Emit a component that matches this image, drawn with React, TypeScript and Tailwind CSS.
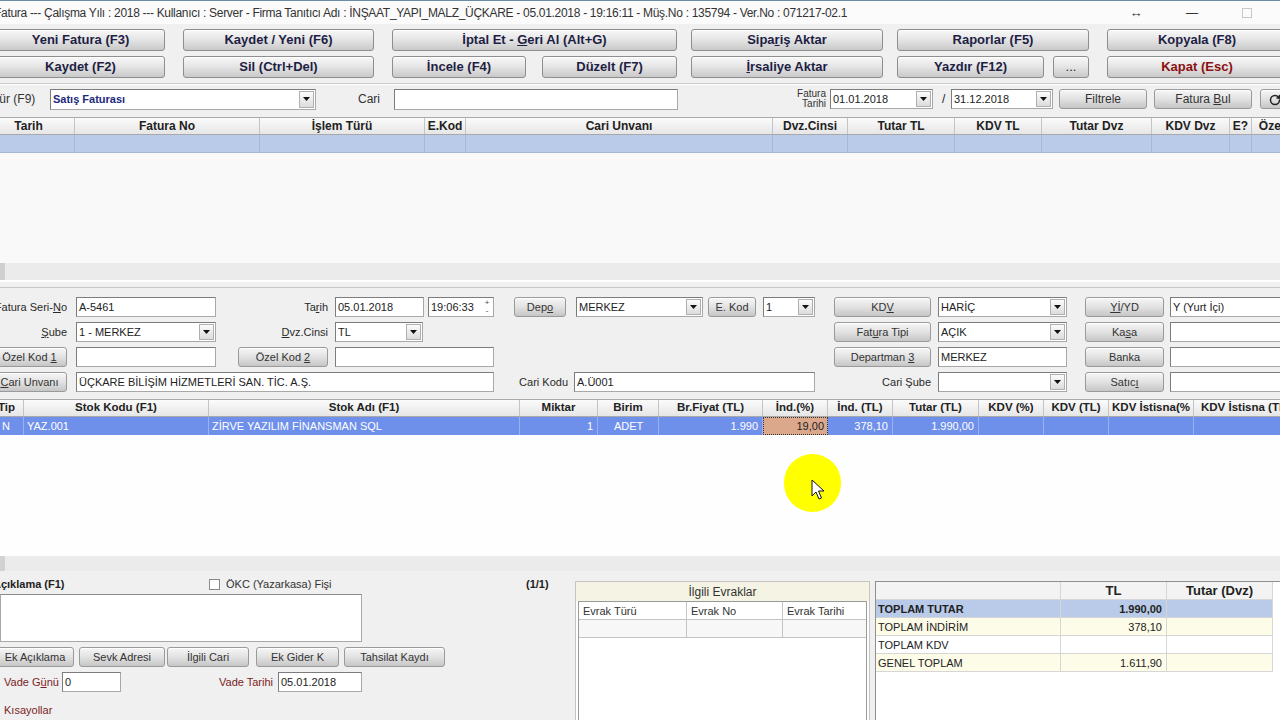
import React from "react"
import { RotateCw } from "lucide-react"

function Arrow() {
  return (
    <svg width="7" height="4" viewBox="0 0 7 4">
      <path d="M0 0h7L3.5 4z" fill="#111" />
    </svg>
  )
}

function BigBtn({ className = "", children, red }: { className?: string; children: React.ReactNode; red?: boolean }) {
  return (
    <div
      className={`flex h-[22px] shrink-0 items-center justify-center rounded-[3px] border border-[#8e8e8e] bg-linear-to-b from-[#f8f8f8] via-[#e4e4e4] to-[#c9c9c9] text-[13px] font-bold shadow-[inset_0_1px_0_#fff] ${
        red ? "text-[#8b1010]" : "text-[#1e1e44]"
      } ${className}`}
    >
      <span className="whitespace-pre">{children}</span>
    </div>
  )
}

function Btn({ className = "", children }: { className?: string; children: React.ReactNode }) {
  return (
    <div
      className={`flex h-[20px] shrink-0 items-center justify-center rounded-[3px] border border-[#9a9a9a] bg-linear-to-b from-[#f6f6f6] via-[#e2e2e2] to-[#c6c6c6] text-[11px] text-[#333] shadow-[inset_0_1px_0_#fff] ${className}`}
    >
      <span className="whitespace-pre">{children}</span>
    </div>
  )
}

function Input({ className = "", value = "" }: { className?: string; value?: string }) {
  return (
    <div
      className={`flex h-[20px] shrink-0 items-center truncate border border-[#a8a8a8] border-t-[#7c7c7c] border-l-[#7c7c7c] bg-white px-[2px] text-[11px] text-[#222] ${className}`}
    >
      {value}
    </div>
  )
}

function Select({ className = "", value = "", valueClass = "text-[#222]" }: { className?: string; value?: string; valueClass?: string }) {
  return (
    <div className={`flex h-[20px] shrink-0 items-stretch border border-[#a8a8a8] border-t-[#7c7c7c] border-l-[#7c7c7c] bg-white ${className}`}>
      <span className={`flex-1 truncate px-[2px] text-[11px] leading-[18px] ${valueClass}`}>{value}</span>
      <span className="m-[1px] flex w-[15px] items-center justify-center border border-[#b0b0b0] bg-linear-to-b from-[#fbfbfb] to-[#dcdcdc]">
        <Arrow />
      </span>
    </div>
  )
}

function Label({ className = "", children }: { className?: string; children: React.ReactNode }) {
  return <div className={`shrink-0 whitespace-nowrap text-right text-[11px] text-[#2a2a2a] ${className}`}>{children}</div>
}

const invoiceCols: [string, string][] = [
  ["Tarih", "w-[92px]"],
  ["Fatura No", "w-[185px]"],
  ["İşlem Türü", "w-[165px]"],
  ["E.Kod", "w-[41px]"],
  ["Cari Unvanı", "w-[307px]"],
  ["Dvz.Cinsi", "w-[75px]"],
  ["Tutar TL", "w-[107px]"],
  ["KDV TL", "w-[87px]"],
  ["Tutar Dvz", "w-[110px]"],
  ["KDV Dvz", "w-[78px]"],
  ["E?", "w-[22px]"],
  ["Özel", "w-[40px]"],
]

const itemCols: { t: string; w: string; v: string; a: string; c?: string }[] = [
  { t: "Tip", w: "w-[34px]", v: "N", a: "text-left pl-[12px]" },
  { t: "Stok Kodu (F1)", w: "w-[185px]", v: "YAZ.001", a: "text-left pl-[3px]" },
  { t: "Stok Adı (F1)", w: "w-[311px]", v: "ZİRVE YAZILIM FİNANSMAN SQL", a: "text-left pl-[3px]" },
  { t: "Miktar", w: "w-[78px]", v: "1", a: "text-right pr-[4px]" },
  { t: "Birim", w: "w-[61px]", v: "ADET", a: "text-left pl-[16px]" },
  { t: "Br.Fiyat (TL)", w: "w-[104px]", v: "1.990", a: "text-right pr-[4px]" },
  { t: "İnd.(%)", w: "w-[65px]", v: "19,00", a: "text-right pr-[3px]", c: "bg-[#dba88c] text-[#222] outline-1 outline-dotted outline-[#333] -outline-offset-1" },
  { t: "İnd. (TL)", w: "w-[65px]", v: "378,10", a: "text-right pr-[4px]" },
  { t: "Tutar (TL)", w: "w-[86px]", v: "1.990,00", a: "text-right pr-[4px]" },
  { t: "KDV (%)", w: "w-[65px]", v: "", a: "" },
  { t: "KDV (TL)", w: "w-[65px]", v: "", a: "" },
  { t: "KDV İstisna(%", w: "w-[85px]", v: "", a: "" },
  { t: "KDV İstisna (TL", w: "w-[100px]", v: "", a: "" },
]

function HeadCell({ className = "", children }: { className?: string; children: React.ReactNode }) {
  return (
    <div
      className={`flex h-full shrink-0 items-center justify-center overflow-hidden whitespace-nowrap border-r border-[#c4c4c4] bg-linear-to-b from-[#fbfbfb] to-[#e6e6e6] font-bold text-[#222] ${className}`}
    >
      {children}
    </div>
  )
}

export default function App() {
  return (
    <div className="relative h-[720px] w-[1280px] overflow-hidden bg-[#f0f0f0] font-['Liberation_Sans',Arial,sans-serif] text-[#222]">
      {/* title bar */}
      <div className="flex h-[24px] items-center border-t border-[#6d8aa6] bg-[#fbfbfb]">
        <div className="-ml-[6px] flex-1 whitespace-nowrap text-[12px] tracking-[-0.3px] text-[#333]">
          Fatura --- Çalışma Yılı : 2018 --- Kullanıcı : Server - Firma Tanıtıcı Adı : İNŞAAT_YAPI_MALZ_ÜÇKARE - 05.01.2018 -
          19:16:11 - Müş.No : 135794 - Ver.No : 071217-02.1
        </div>
        <div className="flex w-[152px] shrink-0 items-center text-[#333]">
          <span className="w-[16px] text-center text-[13px]">↔</span>
          <span className="ml-[38px] w-[20px] text-center text-[12px]">—</span>
          <span className="ml-[40px] h-[10px] w-[10px] border border-[#c8c8c8]" />
        </div>
      </div>

      {/* toolbar buttons */}
      <div className="flex flex-col gap-[5px] pt-[5px]">
        <div className="flex">
          <BigBtn className="-ml-[4px] w-[169px]">Yeni Fatura (F3)</BigBtn>
          <BigBtn className="ml-[18px] w-[191px]">Kaydet / Yeni (F6)</BigBtn>
          <BigBtn className="ml-[18px] w-[285px]">
            İptal Et - <u>G</u>eri Al (Alt+G)
          </BigBtn>
          <BigBtn className="ml-[14px] w-[192px]">
            Sipa<u>r</u>iş Aktar
          </BigBtn>
          <BigBtn className="ml-[14px] w-[192px]">Raporlar (F5)</BigBtn>
          <BigBtn className="ml-[18px] w-[180px]">Kopyala (F8)</BigBtn>
        </div>
        <div className="flex">
          <BigBtn className="-ml-[4px] w-[169px]">Kaydet (F2)</BigBtn>
          <BigBtn className="ml-[18px] w-[191px]">Sil (Ctrl+Del)</BigBtn>
          <BigBtn className="ml-[18px] w-[134px]">İncele (F4)</BigBtn>
          <BigBtn className="ml-[16px] w-[135px]">Düzelt (F7)</BigBtn>
          <BigBtn className="ml-[14px] w-[192px]">
            <u>İ</u>rsaliye Aktar
          </BigBtn>
          <BigBtn className="ml-[14px] w-[147px]">Yazdır (F12)</BigBtn>
          <BigBtn className="ml-[9px] w-[36px] font-normal">...</BigBtn>
          <BigBtn red className="ml-[18px] w-[180px]">
            Kapat (Esc)
          </BigBtn>
        </div>
      </div>

      {/* filter row */}
      <div className="mt-[5px] border-t border-[#c9c9c9] shadow-[inset_0_1px_0_#fff]">
        <div className="mt-[4px] flex h-[22px] items-center">
          <div className="-ml-[8px] w-[48px] shrink-0 text-[12px] text-[#333]">Tür (F9)</div>
          <Select className="ml-[10px] h-[21px] w-[266px]" value="Satış Faturası" valueClass="font-bold text-[#1c2a7c]" />
          <div className="ml-[42px] w-[24px] shrink-0 text-[12px] text-[#333]">Cari</div>
          <Input className="ml-[12px] h-[21px] w-[284px]" />
          <div className="ml-[112px] w-[36px] shrink-0 text-right text-[10px] leading-[10px] text-[#333]">
            Fatura
            <br />
            Tarihi
          </div>
          <Select className="ml-[4px] w-[103px]" value="01.01.2018" />
          <div className="ml-[9px] w-[8px] shrink-0 text-[12px]">/</div>
          <Select className="ml-[1px] w-[102px]" value="31.12.2018" />
          <Btn className="ml-[6px] w-[88px] text-[12px]">Filtrele</Btn>
          <Btn className="ml-[7px] w-[98px] text-[12px]">
            Fatura <u>B</u>ul
          </Btn>
          <Btn className="ml-[8px] w-[30px]">
            <RotateCw size={12} strokeWidth={3} color="#222" className="mt-[2px]" />
          </Btn>
        </div>
      </div>

      {/* invoice grid */}
      <div className="mt-[7px] flex h-[18px] -ml-[17px] border-y border-[#a9a9a9]">
        {invoiceCols.map(([t, w]) => (
          <HeadCell key={t} className={`${w} text-[12px]`}>
            {t}
          </HeadCell>
        ))}
      </div>
      <div className="flex h-[18px] -ml-[17px] border-b border-[#a5b6d6] bg-[#b9cbe9]">
        {invoiceCols.map(([t, w]) => (
          <div key={t} className={`${w} shrink-0 border-r border-[#a6b7d8]`} />
        ))}
      </div>
      <div className="h-[110px] bg-[#f9f9f9]" />
      <div className="flex h-[17px] bg-[#ebebeb]">
        <div className="w-[5px] bg-[#cfcfcf]" />
      </div>
      <div className="h-[14px] border-t-2 border-white">
        <div className="mt-[5px] border-b border-[#c8c8c8]" />
      </div>

      {/* form */}
      <div className="flex flex-col gap-[5px] pt-[3px]">
        <div className="flex h-[20px] items-center">
          <Label className="-ml-[6px] w-[73px]">
            Fatura Seri-<u>N</u>o
          </Label>
          <Input className="ml-[9px] w-[140px]" value="A-5461" />
          <Label className="w-[112px]">
            Ta<u>r</u>ih
          </Label>
          <Input className="ml-[7px] w-[89px]" value="05.01.2018" />
          <div className="ml-[4px] flex h-[20px] w-[66px] shrink-0 items-center border border-[#a8a8a8] border-t-[#7c7c7c] border-l-[#7c7c7c] bg-white text-[11px]">
            <span className="flex-1 pl-[2px]">19:06:33</span>
            <span className="flex h-full w-[12px] flex-col items-center justify-center text-[8px] leading-[8px] text-[#444]">
              <span>+</span>
              <span>-</span>
            </span>
          </div>
          <Btn className="ml-[20px] w-[52px]">
            Dep<u>o</u>
          </Btn>
          <Select className="ml-[10px] w-[127px]" value="MERKEZ" />
          <Btn className="ml-[5px] w-[48px]">E. Kod</Btn>
          <Select className="ml-[7px] w-[52px]" value="1" />
          <Btn className="ml-[19px] w-[97px]">
            KD<u>V</u>
          </Btn>
          <Select className="ml-[7px] w-[129px]" value="HARİÇ" />
          <Btn className="ml-[18px] w-[79px]">
            <u>Yİ</u>/YD
          </Btn>
          <Input className="ml-[6px] w-[120px]" value="Y (Yurt İçi)" />
        </div>

        <div className="flex h-[20px] items-center">
          <Label className="-ml-[6px] w-[73px]">
            <u>Ş</u>ube
          </Label>
          <Select className="ml-[9px] w-[140px]" value="1 - MERKEZ" />
          <Label className="w-[112px]">
            <u>D</u>vz.Cinsi
          </Label>
          <Select className="ml-[7px] w-[88px]" value="TL" />
          <div className="w-[411px] shrink-0" />
          <Btn className="w-[97px]">
            Fat<u>u</u>ra Tipi
          </Btn>
          <Select className="ml-[7px] w-[129px]" value="AÇIK" />
          <Btn className="ml-[18px] w-[79px]">
            Ka<u>s</u>a
          </Btn>
          <Input className="ml-[6px] w-[120px]" />
        </div>

        <div className="flex h-[20px] items-center">
          <Btn className="-ml-[8px] w-[75px]">
            Özel Kod <u>1</u>
          </Btn>
          <Input className="ml-[9px] w-[140px]" />
          <Btn className="ml-[22px] w-[90px]">
            Özel Kod <u>2</u>
          </Btn>
          <Input className="ml-[7px] w-[159px]" />
          <div className="w-[340px] shrink-0" />
          <Btn className="w-[97px]">
            Departman <u>3</u>
          </Btn>
          <Input className="ml-[7px] w-[129px]" value="MERKEZ" />
          <Btn className="ml-[18px] w-[79px]">Banka</Btn>
          <Input className="ml-[6px] w-[120px]" />
        </div>

        <div className="flex h-[20px] items-center">
          <Btn className="-ml-[8px] w-[75px]">
            <u>C</u>ari Unvanı
          </Btn>
          <Input className="ml-[9px] w-[418px]" value="ÜÇKARE BİLİŞİM HİZMETLERİ SAN. TİC. A.Ş." />
          <Label className="w-[74px]">Cari Kodu</Label>
          <Input className="ml-[6px] w-[241px]" value="A.Ü001" />
          <Label className="w-[116px]">Cari Şube</Label>
          <Select className="ml-[7px] w-[129px]" />
          <Btn className="ml-[18px] w-[79px]">
            Satıc<u>ı</u>
          </Btn>
          <Input className="ml-[6px] w-[120px]" />
        </div>
      </div>

      {/* items grid */}
      <div className="mt-[7px] flex h-[18px] -ml-[10px] border-y border-[#a9a9a9]">
        {itemCols.map((c) => (
          <HeadCell key={c.t} className={`${c.w} text-[11.5px]`}>
            {c.t}
          </HeadCell>
        ))}
      </div>
      <div className="flex h-[18px] -ml-[10px] bg-[#6f90ea] text-[11px] text-white">
        {itemCols.map((c) => (
          <div
            key={c.t}
            className={`${c.w} ${c.a} ${c.c ?? ""} shrink-0 overflow-hidden whitespace-nowrap border-r border-[#9bb2f0] leading-[18px]`}
          >
            {c.v}
          </div>
        ))}
      </div>
      <div className="h-[121px] bg-[#fefefe]" />
      <div className="flex h-[15px] bg-[#ebebeb]">
        <div className="w-[5px] bg-[#d2d2d2]" />
      </div>

      {/* bottom */}
      <div className="flex pt-[6px]">
        <div className="flex w-[570px] shrink-0 flex-col">
          <div className="flex h-[14px] items-center text-[11px]">
            <div className="-ml-[7px] w-[216px] shrink-0 font-bold">Açıklama (F1)</div>
            <div className="h-[11px] w-[11px] shrink-0 border border-[#8a8a8a] bg-white" />
            <div className="ml-[6px] w-[300px] shrink-0 text-[#333]">ÖKC (Yazarkasa) Fişi</div>
            <div className="font-bold">(1/1)</div>
          </div>
          <div className="mt-[3px] h-[48px] w-[362px] border border-[#a8a8a8] border-t-[#8a8a8a] bg-white" />
          <div className="mt-[5px] flex h-[20px] items-center">
            <Btn className="-ml-[4px] w-[78px] text-[11px]">Ek Açıklama</Btn>
            <Btn className="ml-[5px] w-[86px] text-[11px]">Sevk Adresi</Btn>
            <Btn className="ml-[2px] w-[82px] text-[11px]">İlgili Cari</Btn>
            <Btn className="ml-[7px] w-[83px] text-[11px]">Ek Gider K</Btn>
            <Btn className="ml-[5px] w-[101px] text-[11px]">Tahsilat Kaydı</Btn>
          </div>
          <div className="mt-[5px] flex h-[20px] items-center text-[11px]">
            <div className="ml-[4px] w-[58px] shrink-0 text-[#7a1e1e]">
              Vade G<u>ü</u>nü
            </div>
            <Input className="w-[59px]" value="0" />
            <div className="ml-[98px] w-[59px] shrink-0 text-[#7a1e1e]">Vade Tarihi</div>
            <Input className="w-[84px]" value="05.01.2018" />
          </div>
          <div className="ml-[4px] mt-[10px] text-[11px] text-[#7a1e1e]">Kısayollar</div>
        </div>

        <div className="ml-[5px] mt-[4px] flex h-[150px] w-[295px] shrink-0 flex-col border border-[#c4c4c4] bg-white">
          <div className="flex h-[19px] items-center justify-center bg-[#f5f3e3] text-[12px] text-[#333]">İlgili Evraklar</div>
          <div className="mx-[2px] flex-1 border border-[#9a9a9a] bg-white">
            <div className="flex h-[18px] border-b border-[#c4c4c4] text-[11px] text-[#333]">
              <div className="w-[108px] border-r border-[#c4c4c4] pl-[4px] leading-[18px]">Evrak Türü</div>
              <div className="w-[96px] border-r border-[#c4c4c4] pl-[4px] leading-[18px]">Evrak No</div>
              <div className="flex-1 pl-[4px] leading-[18px]">Evrak Tarihi</div>
            </div>
            <div className="flex h-[18px] border-b border-[#c4c4c4] bg-[#f7f7f7]">
              <div className="w-[108px] border-r border-[#c4c4c4]" />
              <div className="w-[96px] border-r border-[#c4c4c4]" />
            </div>
          </div>
        </div>

        <div className="ml-[5px] mt-[4px] h-[150px] flex-1 border-t border-l border-[#8f8f8f] bg-white">
          {[
            { l: "", v: "TL", d: "Tutar (Dvz)", row: "bg-[#f3f3f3] font-bold text-[13px]", head: true },
            { l: "TOPLAM TUTAR", v: "1.990,00", d: "", row: "bg-[#b9cbe9] font-bold text-[11px]" },
            { l: "TOPLAM İNDİRİM", v: "378,10", d: "", row: "bg-[#fdfce8] text-[11px]" },
            { l: "TOPLAM KDV", v: "", d: "", row: "bg-white text-[11px]" },
            { l: "GENEL TOPLAM", v: "1.611,90", d: "", row: "bg-[#fdfce8] text-[11px]" },
          ].map((r, i) => (
            <div key={i} className={`flex h-[18px] w-[397px] border-b border-[#d6d6d6] ${r.row}`}>
              <div className="w-[185px] border-r border-[#d6d6d6] pl-[2px] leading-[18px]">{r.l}</div>
              <div className={`w-[106px] border-r border-[#d6d6d6] leading-[18px] ${r.head ? "text-center" : "pr-[4px] text-right"}`}>{r.v}</div>
              <div className={`w-[106px] border-r border-[#d6d6d6] leading-[18px] ${r.head ? "text-center" : ""}`}>{r.d}</div>
            </div>
          ))}
        </div>
      </div>

      {/* recorder cursor highlight */}
      <div className="absolute left-[784px] top-[454px] h-[58px] w-[57px] rounded-full bg-[#ffff00]" />
      <svg className="absolute left-[811px] top-[479px]" width="13" height="21" viewBox="0 0 13 21">
        <path d="M1 1v16l4-4 3 7 2.5-1-3-7h5.5z" fill="#fff" stroke="#111" strokeWidth="1" strokeLinejoin="round" />
      </svg>
    </div>
  )
}
